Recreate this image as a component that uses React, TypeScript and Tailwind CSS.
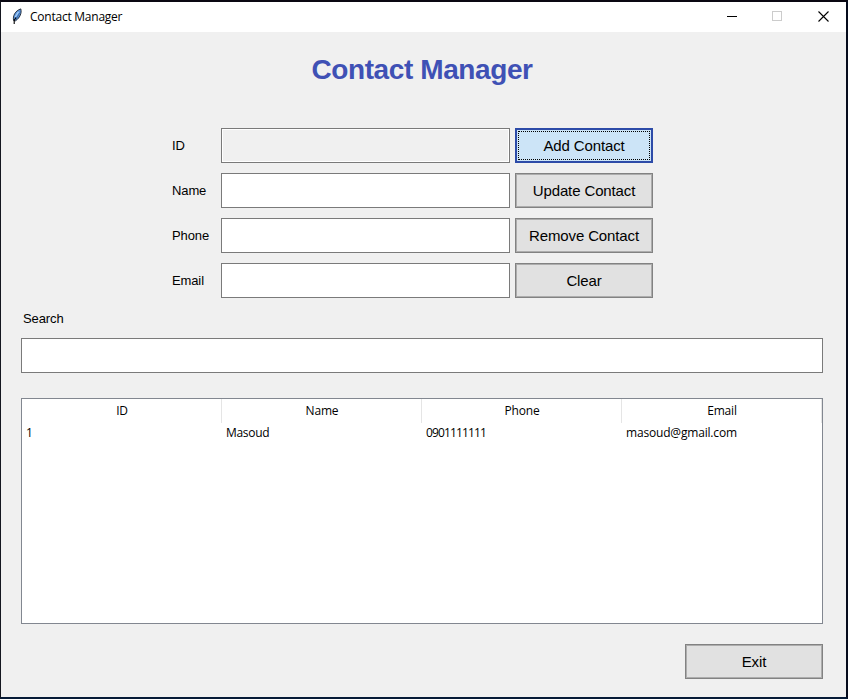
import React from "react";

const fields = [
  { label: "ID", action: "Add Contact" },
  { label: "Name", action: "Update Contact" },
  { label: "Phone", action: "Remove Contact" },
  { label: "Email", action: "Clear" },
];

const columns = ["ID", "Name", "Phone", "Email"];
const contacts = [["1", "Masoud", "0901111111", "masoud@gmail.com"]];

const spacing: Record<string, string> = {
  Masoud: "tracking-[-0.3px]",
  "0901111111": "tracking-[-0.85px]",
  "masoud@gmail.com": "tracking-[-0.18px]",
};

function Feather() {
  return (
    <svg width="12" height="18" viewBox="0 0 12 18" fill="none">
      <path d="M2.6 12.5C1.6 8 4 2.8 9.8 .9C11 5 8.8 10 4.5 12.8Z" fill="#5a93dc" stroke="#1b222c" strokeWidth=".9" />
      <path d="M4.2 9L7.5 3.8" stroke="#a9d0f7" strokeWidth="1.3" />
      <path d="M5.2 11L8.6 5" stroke="#3c6ca8" strokeWidth="1" />
      <path d="M3.2 16V12.5L5 9.5" stroke="#000" strokeWidth="1.1" />
    </svg>
  );
}

function PushButton({ text, focused = false }: { text: string; focused?: boolean }) {
  if (focused) {
    return (
      <button className="h-[35px] w-[138px] border-2 border-[#2d4ba8] bg-[#cce4f7] p-px text-[15px] leading-none tracking-[-0.12px] text-black">
        <span className="flex h-full items-center justify-center border border-dotted border-black">{text}</span>
      </button>
    );
  }
  return (
    <button className="h-[35px] w-[138px] border border-[#828282] bg-[#e1e1e1] text-[15px] leading-none tracking-[-0.12px] text-black">
      <span className="flex h-full items-center justify-center border border-[#adadad]">{text}</span>
    </button>
  );
}

export default function App() {
  return (
    <div className="flex h-[699px] w-[848px] flex-col border-t-2 border-r-2 border-b-2 border-l border-t-[#0a0812] border-r-[#050b1c] border-b-[#061a36] border-l-[#14161f] bg-[#f0f0f0] font-['Liberation_Sans',Arial,sans-serif] text-black">
      <header className="flex h-[30px] shrink-0 items-center bg-white pl-[10px]">
        <Feather />
        <h1 className="ml-[7px] font-['Open_Sans',sans-serif] text-[12px] leading-none tracking-[-0.24px]">Contact Manager</h1>
        <div className="mr-[17px] mb-[2px] ml-auto flex h-[11px] items-start">
          <svg className="mr-[35px]" width="10" height="11" shapeRendering="crispEdges"><path d="M0 5.5H10" stroke="#000" /></svg>
          <svg className="mr-[36px]" width="10" height="10" shapeRendering="crispEdges"><path d="M.5 .5H9.5V9.5H.5Z" fill="none" stroke="#ccc" /></svg>
          <svg width="11" height="11"><path d="M.5 .5L10.5 10.5M10.5 .5L.5 10.5" stroke="#000" strokeWidth="1.1" /></svg>
        </div>
      </header>

      <main className="flex flex-col pr-[23px] pl-[20px]">
        <h2 className="mt-[20px] h-[35px] text-center text-[28px] leading-[35px] font-bold tracking-[-0.4px] text-[#3f51b5]">Contact Manager</h2>

        <form className="mt-[41px] ml-[151px] flex flex-col gap-[10px]">
          {fields.map((f, i) => (
            <div key={f.label} className="flex h-[35px] items-center">
              <label className="w-[49px] text-[13px] leading-none tracking-[-0.12px]">{f.label}</label>
              <input
                disabled={i === 0}
                className={
                  i === 0
                    ? "mr-[5px] h-[35px] w-[289px] border border-[#7a7a7a] bg-[#f0f0f0] shadow-[inset_0_0_0_1px_#fff]"
                    : "mr-[5px] h-[35px] w-[289px] border border-[#7a7a7a] bg-white"
                }
              />
              <PushButton text={f.action} focused={i === 0} />
            </div>
          ))}
        </form>

        <label className="mt-[11px] ml-[2px] h-[20px] text-[13px] leading-[20px] tracking-[-0.1px]">Search</label>
        <input className="mt-[9px] h-[35px] w-[802px] shrink-0 border border-[#7a7a7a] bg-white" />

        <section className="mt-[25px] h-[226px] w-[802px] border border-[#828790] bg-white font-['Open_Sans',sans-serif] text-[12px]">
          <div className="flex h-[24px]">
            {columns.map((c) => (
              <div key={c} className="h-[24px] w-[200px] border-r border-[#e5e5e5] pl-px text-center leading-[24px] tracking-[-0.2px]">{c}</div>
            ))}
          </div>
          {contacts.map((row) => (
            <div key={row[0]} className="flex h-[20px]">
              {row.map((cell) => (
                <div key={cell} className={`w-[200px] pl-[4px] leading-[20px] ${spacing[cell] ?? ""}`}>{cell}</div>
              ))}
            </div>
          ))}
        </section>

        <div className="mt-[20px] flex justify-end">
          <PushButton text="Exit" />
        </div>
      </main>
    </div>
  );
}
